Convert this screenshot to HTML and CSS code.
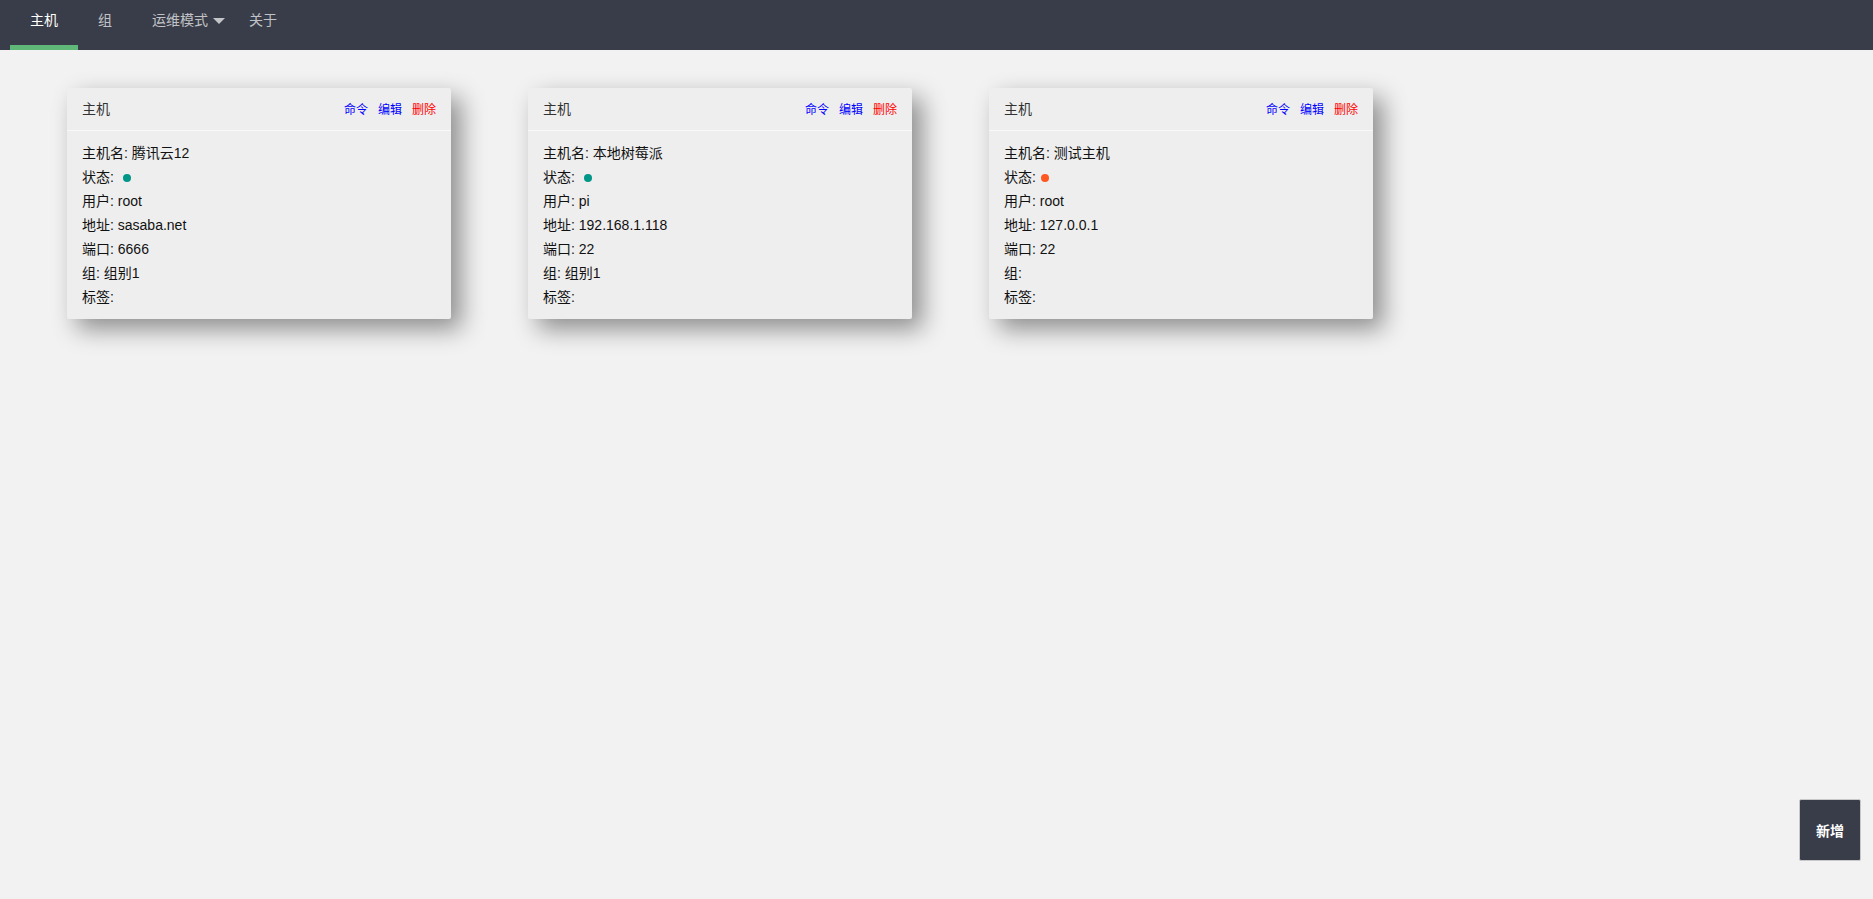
FILE: index.html
```html
<!DOCTYPE html>
<html lang="zh-CN">
<head>
<meta charset="utf-8">
<title>主机</title>
<link rel="stylesheet" href="styles.css">
</head>
<body>
<header class="topbar">
  <nav class="nav">
    <a class="nav-item active">主机</a>
    <a class="nav-item">组</a>
    <a class="nav-item more">运维模式<span class="caret"></span></a>
    <a class="nav-item">关于</a>
  </nav>
</header>
<main class="cards">
  <section class="card">
    <div class="card-header">
      <span class="card-title">主机</span>
      <span class="actions"><a class="act blue">命令</a><a class="act blue">编辑</a><a class="act red">删除</a></span>
    </div>
    <div class="card-body">
      <div>主机名: 腾讯云12</div>
      <div>状态: <span class="dot ok"></span></div>
      <div>用户: root</div>
      <div>地址: sasaba.net</div>
      <div>端口: 6666</div>
      <div>组: 组别1</div>
      <div>标签:</div>
    </div>
  </section>
  <section class="card">
    <div class="card-header">
      <span class="card-title">主机</span>
      <span class="actions"><a class="act blue">命令</a><a class="act blue">编辑</a><a class="act red">删除</a></span>
    </div>
    <div class="card-body">
      <div>主机名: 本地树莓派</div>
      <div>状态: <span class="dot ok"></span></div>
      <div>用户: pi</div>
      <div>地址: 192.168.1.118</div>
      <div>端口: 22</div>
      <div>组: 组别1</div>
      <div>标签:</div>
    </div>
  </section>
  <section class="card">
    <div class="card-header">
      <span class="card-title">主机</span>
      <span class="actions"><a class="act blue">命令</a><a class="act blue">编辑</a><a class="act red">删除</a></span>
    </div>
    <div class="card-body">
      <div>主机名: 测试主机</div>
      <div>状态:<span class="dot bad"></span></div>
      <div>用户: root</div>
      <div>地址: 127.0.0.1</div>
      <div>端口: 22</div>
      <div>组:</div>
      <div>标签:</div>
    </div>
  </section>
</main>
<button class="add-btn">新增</button>
</body>
</html>
```
FILE: styles.css
```css
* { box-sizing: border-box; }
html, body { margin: 0; padding: 0; }
body {
  background: #f2f2f2;
  font-family: "Liberation Sans", Arial, "Noto Sans CJK SC", sans-serif;
  font-size: 14px;
  color: #333;
  min-height: 899px;
}
.topbar {
  height: 50px;
  background: #393d49;
}
.nav {
  display: flex;
  padding-left: 10px;
  height: 50px;
}
.nav-item {
  display: flex;
  align-items: center;
  height: 50px;
  padding: 0 20px 5px;
  border-bottom: 5px solid transparent;
  color: rgba(255,255,255,0.7);
  font-size: 14px;
  line-height: 41px;
  cursor: pointer;
}
.nav-item.active {
  color: #fff;
  border-bottom-color: #5fb878;
}
.nav-item.more { padding-right: 4px; }
.caret {
  display: inline-block;
  width: 0;
  height: 0;
  margin-left: 5px;
  margin-top: 1px;
  border-left: 6px solid transparent;
  border-right: 6px solid transparent;
  border-top: 6px solid rgba(255,255,255,0.7);
}
.cards {
  display: flex;
  align-items: flex-start;
  gap: 77px;
  padding: 38px 0 0 67px;
}
.card {
  width: 384px;
  background: #eeeeee;
  border-radius: 2px;
  box-shadow: 10px 10px 24px rgba(0,0,0,0.42);
}
.card-header {
  display: flex;
  justify-content: space-between;
  align-items: center;
  height: 43px;
  padding: 0 15px 2px;
  border-bottom: 1px solid #f8f8f8;
  color: #333;
}
.actions { display: flex; gap: 10px; font-size: 12px; }
.act { cursor: pointer; }
.act.blue { color: #0000ff; }
.act.red { color: #ff0000; }
.card-body {
  padding: 10px 15px;
  line-height: 24px;
  color: #111;
}
.dot {
  display: inline-block;
  width: 8px;
  height: 8px;
  border-radius: 50%;
  margin-left: 5px;
  vertical-align: 0;
}
.dot.ok { background: #009688; }
.dot.bad { background: #ff5722; }
.add-btn {
  position: fixed;
  right: 12px;
  bottom: 38px;
  width: 62px;
  height: 62px;
  background: #393d49;
  border: 1px solid #c8c8c8;
  border-radius: 2px;
  color: #fff;
  font-family: "Liberation Sans", Arial, "Noto Sans CJK SC", sans-serif;
  font-size: 14px;
  font-weight: bold;
  cursor: pointer;
}
```
